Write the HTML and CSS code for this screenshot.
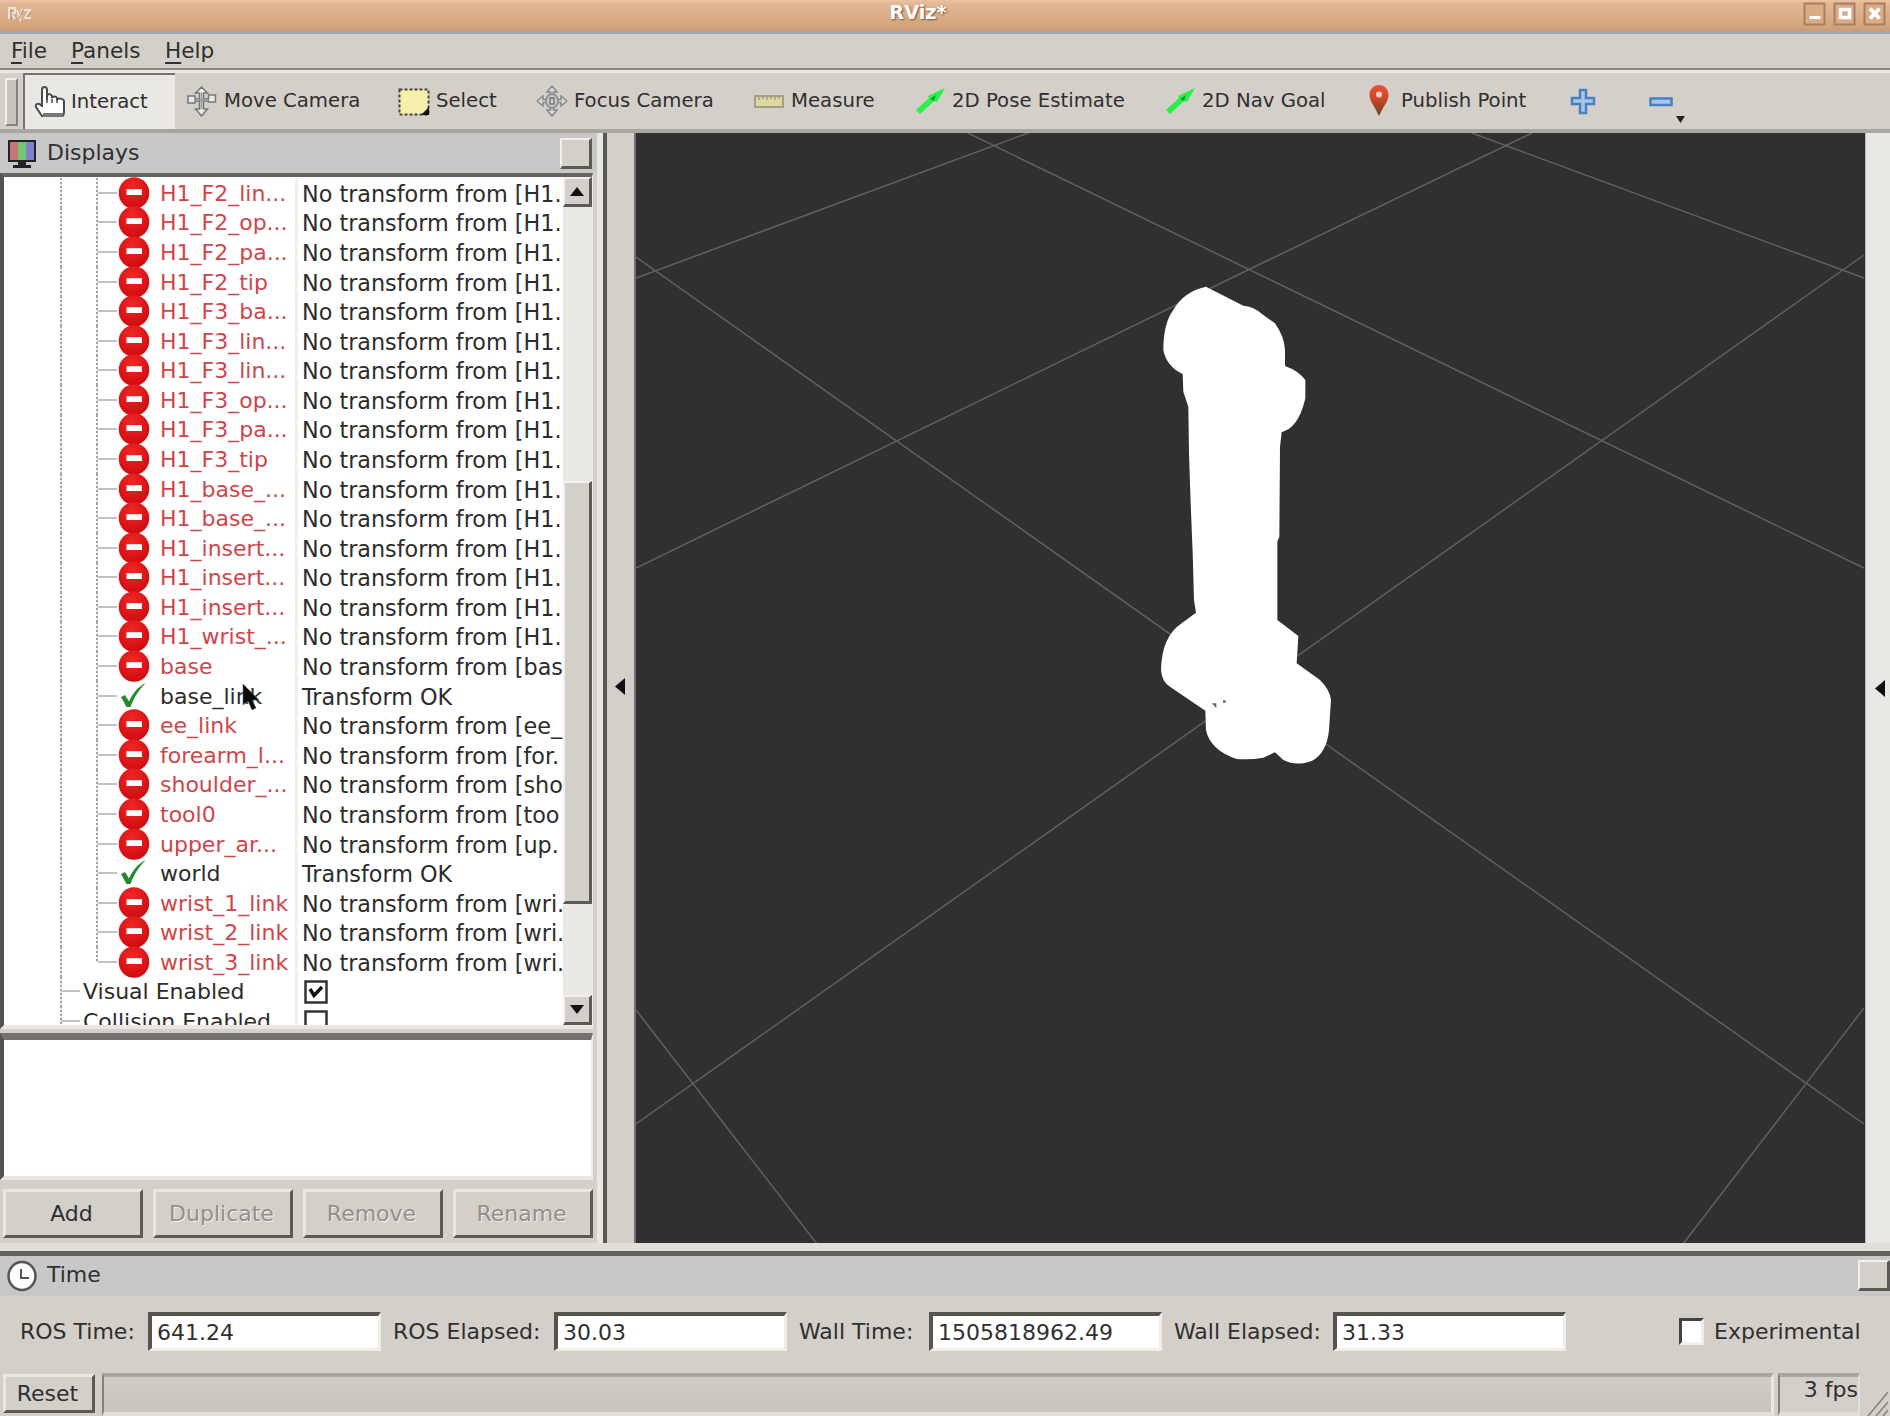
FILE: index.html
```html
<!DOCTYPE html>
<html lang="en">
<head>
<meta charset="utf-8">
<title>RViz*</title>
<link rel="stylesheet" href="styles.css">
</head>
<body>
<svg class="defs" aria-hidden="true">
  <defs>
    <radialGradient id="red" cx=".45" cy=".3" r=".7"><stop offset="0" stop-color="#f02824"/><stop offset="1" stop-color="#d00a10"/></radialGradient>
    <linearGradient id="pin" x1="0" y1="0" x2="0" y2="1"><stop offset="0" stop-color="#e8543c"/><stop offset=".45" stop-color="#cf4526"/><stop offset="1" stop-color="#5c4a1c"/></linearGradient>
    <symbol id="err" viewBox="0 0 32 32"><ellipse cx="16" cy="16" rx="15.3" ry="15.8" fill="url(#red)"/><rect x="8.5" y="12.2" width="15.5" height="5.8" fill="#fff"/></symbol>
    <symbol id="ok" viewBox="0 0 32 32"><path d="M3 17l4-2 4 6.500C15 13 20 7 27.500 3 21 10 15.500 18 12.500 27H8.500z" fill="#25882f"/></symbol>
    <symbol id="arrow" viewBox="0 0 32 32"><path d="M2 25L15 13l-1-2L31 3 23 17l-3-1L6 29z" fill="#2af04a"/><path d="M16 14l6-4-2 6z" fill="#0a9a2a"/></symbol>
  </defs>
</svg>
<div class="window">
  <header class="titlebar">
    <svg class="logo" width="26" height="18" viewBox="0 0 26 18" fill="none" stroke="#efe2d8" stroke-width="2"><path d="M2 15V4h6v5H3l5 6M10 6l3 9 2-10M17 6h6l-5 8h6"/><path d="M4 16V6M12 15l4-9M20 13l4-5" stroke="#9a8474" stroke-width="1"/></svg>
    <h1 class="caption">RViz*</h1>
    <div class="winbtns">
      <svg width="24" height="24" viewBox="0 0 24 24"><rect x="1.500" y="1.500" width="20" height="21" class="wb"/><path d="M6.500 15.500h11" stroke="#fff" stroke-width="3"/></svg>
      <svg width="24" height="24" viewBox="0 0 24 24"><rect x="1.500" y="1.500" width="20" height="21" class="wb"/><path d="M7.500 7.500h9v8h-9z" stroke="#fff" stroke-width="3.500" fill="none"/></svg>
      <svg width="24" height="24" viewBox="0 0 24 24"><rect x="1.500" y="1.500" width="20" height="21" class="wb"/><path d="M7 6.500l9.500 10M16.500 6.500l-9.500 10" stroke="#fff" stroke-width="3.800"/></svg>
    </div>
  </header>
  <nav class="menubar"><span class="m1"><u>F</u>ile</span><span class="m2"><u>P</u>anels</span><span><u>H</u>elp</span></nav>
  <div class="toolbar">
    <i class="grip"></i>
    <div class="tool active"><svg width="32" height="32" viewBox="0 0 32 32"><path d="M8 21V4c0-4 5-4 5 0v10V10c1-3 4-2 5 0v2c1-2 4-2 5 0v2c1-2 6-2 7 1v10c0 3-1 5-2 5H8L2 21c-1-4 3-4 6-1z" fill="#fff" stroke="#4a4a4a" stroke-width="2"/><path d="M9 27h20v4H9z" fill="#777"/><path d="M13 14v3M18 13v4M23 14v3" stroke="#4a4a4a" stroke-width="1.500"/></svg>Interact</div>
    <div class="tool"><svg width="32" height="32" viewBox="0 0 32 32"><path d="M15.500 2l6 6h-4v6h5v-4h7v7h-7v-1h-5v8h4l-6 7-6-7h4v-8H9v2H2v-7h7v3h4.500V8h-4z" fill="#e8e8e4" stroke="#74777a" stroke-width="1.500"/><path d="M15.500 8v16M10 15h12" stroke="#999" stroke-width="1.500"/></svg>Move Camera</div>
    <div class="tool"><svg width="32" height="32" viewBox="0 0 32 32"><path d="M1.500 4.500h29v25h-29z" fill="#f7efae" stroke="#45433a" stroke-width="2" stroke-dasharray="3 2"/><path d="M31 22v8h-8z" fill="#111"/></svg>Select</div>
    <div class="tool"><svg width="32" height="32" viewBox="0 0 32 32"><path d="M16 1l5 6h-3.500v4M16 31l5-6h-3.500v-4M1 16l6-5v3.500h4M31 16l-6-5v3.500h-4M16 1l-5 6h3.500v4M16 31l-5-6h3.500v-4M1 16l6 5v-3.500h4M31 16l-6 5v-3.500h-4" fill="#dddcda" stroke="#85888b" stroke-width="1.500"/><ellipse cx="16" cy="16" rx="6" ry="7" fill="#cbcccd" stroke="#909396" stroke-width="2"/><path d="M14 13h4v6h-4z" fill="none" stroke="#777" stroke-width="1.500"/></svg>Focus Camera</div>
    <div class="tool"><svg width="32" height="32" viewBox="0 0 32 32"><path d="M2 11h28v11H2z" fill="#dfd6a0" stroke="#a39e84" stroke-width="2"/><path d="M6 11v4M10 11v3M14 11v4M18 11v3M22 11v4M26 11v3" stroke="#a39e84" stroke-width="1.500"/></svg>Measure</div>
    <div class="tool"><svg width="32" height="32"><use href="#arrow"/></svg>2D Pose Estimate</div>
    <div class="tool"><svg width="32" height="32"><use href="#arrow"/></svg>2D Nav Goal</div>
    <div class="tool"><svg width="32" height="32" viewBox="0 0 32 32"><path d="M16 0c6 0 9.500 4.500 9.500 10 0 6-5 11-9.500 21C11.500 21 6.500 16 6.500 10 6.500 4.500 10 0 16 0z" fill="url(#pin)"/><circle cx="16" cy="9.500" r="3" fill="#f5d0c8"/></svg>Publish Point</div>
    <div class="tool"><svg width="32" height="32" viewBox="0 0 32 32"><path d="M13 5h6v8h8v6h-8v9h-6v-9H5v-6h8z" fill="#a6c6ea" stroke="#4a7fc4" stroke-width="2.500"/></svg></div>
    <div class="tool"><svg width="44" height="44" viewBox="0 0 44 44"><path d="M5.500 19.500h21v6.500h-21z" fill="#a6c6ea" stroke="#4a7fc4" stroke-width="2.500"/><path d="M31 37h9l-4.500 7z" fill="#222"/></svg></div>
  </div>
  <main class="middle">
    <section class="displays">
      <div class="dockhead"><svg width="30" height="32" viewBox="0 0 30 32"><path d="M1 2h28v22H1z" fill="#222"/><path d="M3 4h8v18H3z" fill="#c87474"/><path d="M11 4h8v18h-8z" fill="#72c872"/><path d="M19 4h8v18h-8z" fill="#8080cc"/><path d="M11 24h8v3h5v3H6v-3h5z" fill="#222"/></svg><span>Displays</span><i class="sq"></i></div>
      <div class="treebox">
        <div class="tree">
          <div class="row"><i></i><svg><use href="#err"/></svg><b>H1_F2_lin...</b><span>No transform from [H1.</span></div>
          <div class="row"><i></i><svg><use href="#err"/></svg><b>H1_F2_op...</b><span>No transform from [H1.</span></div>
          <div class="row"><i></i><svg><use href="#err"/></svg><b>H1_F2_pa...</b><span>No transform from [H1.</span></div>
          <div class="row"><i></i><svg><use href="#err"/></svg><b>H1_F2_tip</b><span>No transform from [H1.</span></div>
          <div class="row"><i></i><svg><use href="#err"/></svg><b>H1_F3_ba...</b><span>No transform from [H1.</span></div>
          <div class="row"><i></i><svg><use href="#err"/></svg><b>H1_F3_lin...</b><span>No transform from [H1.</span></div>
          <div class="row"><i></i><svg><use href="#err"/></svg><b>H1_F3_lin...</b><span>No transform from [H1.</span></div>
          <div class="row"><i></i><svg><use href="#err"/></svg><b>H1_F3_op...</b><span>No transform from [H1.</span></div>
          <div class="row"><i></i><svg><use href="#err"/></svg><b>H1_F3_pa...</b><span>No transform from [H1.</span></div>
          <div class="row"><i></i><svg><use href="#err"/></svg><b>H1_F3_tip</b><span>No transform from [H1.</span></div>
          <div class="row"><i></i><svg><use href="#err"/></svg><b>H1_base_...</b><span>No transform from [H1.</span></div>
          <div class="row"><i></i><svg><use href="#err"/></svg><b>H1_base_...</b><span>No transform from [H1.</span></div>
          <div class="row"><i></i><svg><use href="#err"/></svg><b>H1_insert...</b><span>No transform from [H1.</span></div>
          <div class="row"><i></i><svg><use href="#err"/></svg><b>H1_insert...</b><span>No transform from [H1.</span></div>
          <div class="row"><i></i><svg><use href="#err"/></svg><b>H1_insert...</b><span>No transform from [H1.</span></div>
          <div class="row"><i></i><svg><use href="#err"/></svg><b>H1_wrist_...</b><span>No transform from [H1.</span></div>
          <div class="row"><i></i><svg><use href="#err"/></svg><b>base</b><span>No transform from [bas</span></div>
          <div class="row good"><i></i><svg><use href="#ok"/></svg><b>base_link</b><span>Transform OK</span></div>
          <div class="row"><i></i><svg><use href="#err"/></svg><b>ee_link</b><span>No transform from [ee_</span></div>
          <div class="row"><i></i><svg><use href="#err"/></svg><b>forearm_l...</b><span>No transform from [for.</span></div>
          <div class="row"><i></i><svg><use href="#err"/></svg><b>shoulder_...</b><span>No transform from [sho</span></div>
          <div class="row"><i></i><svg><use href="#err"/></svg><b>tool0</b><span>No transform from [too</span></div>
          <div class="row"><i></i><svg><use href="#err"/></svg><b>upper_ar...</b><span>No transform from [up.</span></div>
          <div class="row good"><i></i><svg><use href="#ok"/></svg><b>world</b><span>Transform OK</span></div>
          <div class="row"><i></i><svg><use href="#err"/></svg><b>wrist_1_link</b><span>No transform from [wri.</span></div>
          <div class="row"><i></i><svg><use href="#err"/></svg><b>wrist_2_link</b><span>No transform from [wri.</span></div>
          <div class="row last"><i></i><svg><use href="#err"/></svg><b>wrist_3_link</b><span>No transform from [wri.</span></div>
          <div class="row prop"><i></i><b>Visual Enabled</b><span><svg class="cb" viewBox="0 0 24 24"><path d="M1.500 1.500h21v21h-21z" fill="#fff" stroke="#333" stroke-width="2.500"/><path d="M6 9l4 6.500L18 7" fill="none" stroke="#111" stroke-width="3.500"/></svg></span></div>
          <div class="row prop"><i></i><b>Collision Enabled</b><span><svg class="cb" viewBox="0 0 24 24"><path d="M1.500 1.500h21v21h-21z" fill="#fff" stroke="#333" stroke-width="2.500"/></svg></span></div>
        </div>
        <div class="scroll"><div class="sbtn"><svg width="14" height="9"><path d="M0 9L7 0l7 9z" fill="#111"/></svg></div><div class="thumb"></div><div class="sbtn down"><svg width="14" height="9"><path d="M0 0h14L7 9z" fill="#111"/></svg></div></div>
        <svg class="cursor" width="20" height="30" viewBox="0 0 20 30"><path d="M1 1v21l5-4 4 9 4-2-4-8h7z" fill="#0a0a0a" stroke="#666" stroke-width=".6"/></svg>
      </div>
      <div class="desc"></div>
      <div class="buttons"><button>Add</button><button disabled>Duplicate</button><button disabled>Remove</button><button disabled>Rename</button></div>
    </section>
    <div class="splitter"><svg width="10" height="17"><path d="M10 0v17L0 8.500z" fill="#111"/></svg></div>
    <svg class="view" width="1229" height="1111" viewBox="636 132 1229 1111">
      <g stroke="#606060" stroke-width="1.500" fill="none">
        <path d="M1028 132L636 277M968 132L1864 567M1532 132L1248 269 636 567M1472 132L1864 277M636 256L1864 1123M1864 254L636 1123M636 1009L817 1243M1864 1007L1683 1243"/>
      </g>
      <g transform="translate(1130 269) scale(.33333)">
        <path fill="#fff" d="M228 50L340 107Q370 108 400 135L435 160Q463 200 465 240V288Q505 302 526 330V385Q510 455 475 478L455 487 450 530 448 800 442 815V1050L505 1098 500 1180 570 1230Q600 1260 603 1290L597 1380Q590 1450 545 1473 500 1490 460 1470L435 1447 400 1463Q360 1470 320 1467 240 1440 228 1380L226 1322 120 1250Q95 1235 93 1200 95 1100 155 1060L198 1028 192 990 188 850 182 700 177 550 175 410 160 365 158 312Q110 290 100 240 100 160 130 120 160 65 228 50z"/>
        <path d="M246 1300h13v15zM279 1291h8v7h-8z" fill="#666"/>
      </g>
    </svg>
    <div class="rightstrip"><svg width="10" height="17"><path d="M10 0v17L0 8.500z" fill="#111"/></svg></div>
  </main>
  <section class="time">
    <div class="dockhead"><svg width="30" height="32" viewBox="0 0 30 32"><ellipse cx="15" cy="16" rx="13.500" ry="14" fill="#fff" stroke="#555" stroke-width="2.500"/><path d="M14 9v9h8" fill="none" stroke="#555" stroke-width="2"/></svg><span>Time</span><i class="sq"></i></div>
    <div class="form">
      <label>ROS Time:</label><div class="field">641.24</div>
      <label>ROS Elapsed:</label><div class="field">30.03</div>
      <label>Wall Time:</label><div class="field">1505818962.49</div>
      <label>Wall Elapsed:</label><div class="field">31.33</div>
      <i class="check"></i><label>Experimental</label>
    </div>
  </section>
  <footer class="status"><button>Reset</button><div class="msg"></div><div class="fps">3 fps</div><svg width="24" height="39" viewBox="0 0 24 39"><path d="M4 39L24 15M12 39l12-14M19 39l5-6" stroke="#85827c" stroke-width="1.500"/></svg></footer>
</div>
</body>
</html>
```
FILE: styles.css
```css
* { box-sizing: border-box; }
body { margin: 0; background: #d4cfc8; overflow: hidden; }
svg { display: block; flex: none; }
.defs { width: 0; height: 0; position: absolute; }
.window {
  width: 1890px; height: 1416px; display: flex; flex-direction: column;
  font: 22px/26px "DejaVu Sans", sans-serif; color: #303030; background: #d4cfc8;
}
.titlebar {
  height: 34px; flex: none; display: grid; grid-template-columns: 200px 1fr 200px;
  background: linear-gradient(#edc2a2, #e1b592 5px, #dbb08b 14px, #d3a27b 28px, #c99a78);
  border-bottom: 3px solid #9fa9b5;
}
.logo { margin: 4px 0 0 7px; }
.caption { margin: 0 0 0 -54px; text-align: center; font-size: 19.3px; line-height: 25px; color: #fff; text-shadow: 1px 1px 2px #775237; }
.winbtns { display: flex; justify-content: flex-end; gap: 6px; padding: 2px 3px 0 0; }
.wb { fill: #d9ab87; stroke: #a87f60; stroke-width: 2; }
.menubar { height: 36px; flex: none; padding: 3px 0 0 11px; display: flex; font-size: 21.6px; line-height: 28px; border-bottom: 2px solid #8a8984; }
.menubar u { text-decoration-thickness: 2px; text-underline-offset: 4px; }
.m1 { width: 60px; }
.m2 { width: 94px; }
.toolbar {
  height: 63px; flex: none; display: grid;
  grid-template-columns: 23px 152px 212px 138px 217px 161px 250px 199px 204px 78px 80px;
  border-top: 3px solid #eceae5; border-bottom: 4px solid #a9a69f; font-size: 19.7px;
}
.grip { margin: 5px 5px 3px 5px; border: 2px solid #f0eee9; border-right-color: #85837d; border-bottom-color: #85837d; background: #c9c5be; }
.tool { display: flex; align-items: center; gap: 6px; padding-left: 11px; white-space: nowrap; }
.active { background: #e9e8e4; border-left: 2px solid #77746e; border-top: 2px solid #77746e; padding-left: 9px; gap: 5px; }
.middle { height: 1110px; flex: none; display: flex; }
.displays { width: 603px; flex: none; background: #d4cfc8; border-right: 6px solid #e9e7e2; display: flex; flex-direction: column; }
.dockhead { height: 40px; flex: none; background: #c8c8c8; display: flex; align-items: center; padding-left: 7px; gap: 10px; }
.displays > .dockhead { border-top: 1px solid #c8c5be; }
.displays > .dockhead span { padding-bottom: 2px; }
.sq { width: 32px; height: 31px; margin-left: auto; margin-right: 5px; background: #d4cfc8; border: 2px solid; border-color: #f2f0ec #5d5a55 #5d5a55 #f2f0ec; border-right-width: 3px; border-bottom-width: 3px; }
.treebox { position: relative; height: 856px; width: 593px; display: flex; border-top: 4px solid #65645f; border-left: 4px solid #55534f; border-bottom: 4px solid #e9e7e2; border-right: 1px solid #eeeeec; background: #fff; overflow: hidden; }
.tree { width: 559px; flex: none; overflow: hidden; padding-top: 1px; }
.row {
  height: 29.58px; display: flex; align-items: center; white-space: nowrap;
  background:
    repeating-linear-gradient(#a5a5a5 0 2px, #ededed 2px 4px) 56px 0 / 2px 100% no-repeat,
    repeating-linear-gradient(#a5a5a5 0 2px, #ededed 2px 4px) 92px 0 / 2px 100% no-repeat,
    linear-gradient(#f0f0ee, #f0f0ee) 291px 0 / 3px 100% no-repeat;
}
.row.last {
  background:
    repeating-linear-gradient(#a5a5a5 0 2px, #ededed 2px 4px) 56px 0 / 2px 100% no-repeat,
    repeating-linear-gradient(#a5a5a5 0 2px, #ededed 2px 4px) 92px 0 / 2px 50% no-repeat,
    linear-gradient(#f0f0ee, #f0f0ee) 291px 0 / 3px 100% no-repeat;
}
.row.prop {
  background:
    repeating-linear-gradient(#a5a5a5 0 2px, #ededed 2px 4px) 56px 0 / 2px 100% no-repeat,
    linear-gradient(#f0f0ee, #f0f0ee) 291px 0 / 3px 100% no-repeat;
}
.row i { width: 19px; height: 2px; background: #c2c2c2; margin-left: 94px; flex: none; }
.row svg { width: 32px; height: 32px; margin-left: 1px; }
.row b { font-weight: normal; color: #cf454a; width: 151px; padding: 2px 0 0 10px; flex: none; }
.row span { color: #2c2c2c; padding: 2px 0 0 1px; font-size: 22.3px; }
.row.good b, .row.prop b { color: #2c2c2c; }
.row.prop i { margin-left: 57px; }
.row.prop b { width: 223px; padding-left: 3px; }
.row.prop .cb { width: 24px; height: 24px; margin: 0; }
.scroll { width: 29px; background: #eae9e5; display: flex; flex-direction: column; }
.sbtn, .thumb { background: #d4cfc8; border: 2px solid; border-color: #f2f0ec #5d5a55 #5d5a55 #f2f0ec; border-right-width: 3px; border-bottom-width: 3px; }
.sbtn { height: 30px; display: flex; align-items: center; justify-content: center; }
.thumb { margin-top: 274px; height: 423px; }
.down { margin-top: auto; }
.cursor { position: absolute; left: 238px; top: 506px; }
.desc { width: 593px; height: 147px; margin-top: 4px; border-top: 7px solid #75726d; border-left: 4px solid #55534f; border-bottom: 4px solid #e9e7e2; border-right: 2px solid #eeeeec; background: #fff; }
.buttons { display: flex; gap: 10px; padding: 9px 0 0 3px; }
button { width: 140px; height: 49px; padding: 0 3px 0 0; font: inherit; color: #303030; background: #d4cfc8; border: 3px solid; border-color: #e9e7e2 #5d5a55 #5d5a55 #e9e7e2; border-radius: 0; }
button:disabled { color: #92908b; text-shadow: 1px 1px 0 #f2f0ec; }
.splitter { width: 33px; flex: none; border-left: 4px solid #5a5853; border-right: 2px solid #75726d; display: flex; align-items: center; padding: 0 0 4px 8px; }
.view { background: #303030; }
.rightstrip { flex: 1; background: #e9e8e4; display: flex; align-items: center; padding-left: 9px; border-left: 1px solid #bbb8b1; }
.time { height: 130px; flex: none; border-top: 8px solid #e2dfd8; }
.time .dockhead { height: 45px; border-top: 5px solid #65635e; }
.time .dockhead span { padding-bottom: 3px; }
.time .sq { margin-right: 0; margin-bottom: 2px; }
.form { height: 77px; display: grid; grid-template-columns: 128px 233px 173px 233px 142px 233px 171px 346px 35px 1fr; align-items: center; padding: 0 0 6px 20px; white-space: nowrap; }
.form label:nth-of-type(n+2) { padding-left: 12px; }
.form .check + label { padding-left: 0; }
.field { height: 39px; width: 233px; padding: 0 0 0 5px; line-height: 33px; background: #fff; border: 3px solid; border-width: 4px 3px 3px 4px; border-color: #57544f #f0eeea #f0eeea #57544f; }
.check { width: 25px; height: 27px; background: #fff; border: 3px solid; border-color: #45423e #f0eeea #f0eeea #45423e; }
.status { height: 43px; flex: none; display: flex; }
.status button { width: 92px; height: 39px; margin: 1px 7px 0 3px; line-height: 34px; }
.msg { width: 1672px; border: 2px solid; border-width: 4px 3px 4px 2px; border-color: #aaa79f #e9e7e2 #e2dfd8 #85827c; background: linear-gradient(#d2cdc6, #c8c4bc); }
.fps { width: 82px; margin-left: 4px; text-align: right; border: 2px solid; border-width: 4px 2px 4px 2px; border-color: #aaa79f #e2dfd8 #e2dfd8 #85827c; }
.status > svg { margin: 4px 0 0 4px; }
```
